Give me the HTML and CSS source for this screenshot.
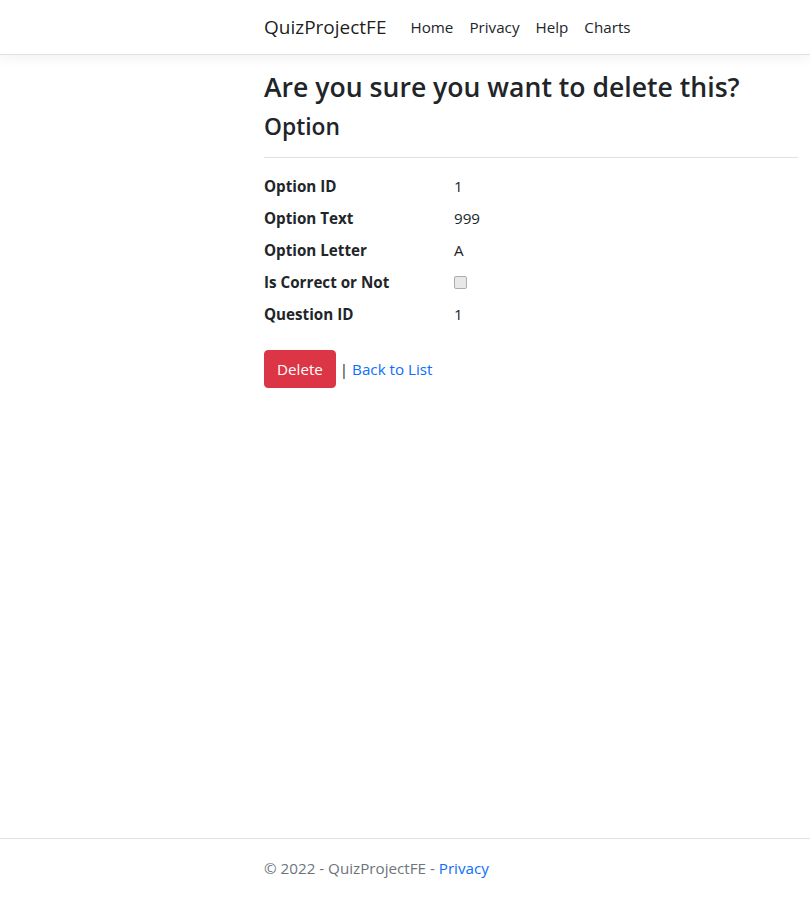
FILE: index.html
```html
<!DOCTYPE html>
<html lang="en">
<head>
<meta charset="utf-8">
<title>Delete - QuizProjectFE</title>
<link rel="stylesheet" href="styles.css">
</head>
<body>
<div class="page">
  <header class="site-header">
    <nav class="navbar">
      <div class="container nav-inner">
        <a class="brand" href="#">QuizProjectFE</a>
        <ul class="nav-list">
          <li><a class="nav-link" href="#">Home</a></li>
          <li><a class="nav-link" href="#">Privacy</a></li>
          <li><a class="nav-link" href="#">Help</a></li>
          <li><a class="nav-link" href="#">Charts</a></li>
        </ul>
      </div>
    </nav>
  </header>

  <main class="container main">
    <h3 class="title">Are you sure you want to delete this?</h3>
    <div>
      <h4 class="subtitle">Option</h4>
      <hr class="rule">
      <dl class="details">
        <dt>Option ID</dt>
        <dd>1</dd>
        <dt>Option Text</dt>
        <dd>999</dd>
        <dt>Option Letter</dt>
        <dd>A</dd>
        <dt>Is Correct or Not</dt>
        <dd><input class="check-box" type="checkbox" disabled></dd>
        <dt>Question ID</dt>
        <dd>1</dd>
      </dl>
      <form class="actions" action="#">
        <button type="button" class="btn-danger">Delete</button> <span class="sep">|</span> <a class="link" href="#">Back to List</a>
      </form>
    </div>
  </main>

  <footer class="footer">
    <div class="container">
      &copy; 2022 - QuizProjectFE - <a class="link" href="#">Privacy</a>
    </div>
  </footer>
</div>
</body>
</html>
```
FILE: styles.css
```css
* { box-sizing: border-box; }

html, body {
  margin: 0;
  padding: 0;
}

body {
  font-family: "Open Sans", "Noto Sans", sans-serif;
  font-size: 15.2px;
  line-height: 24px;
  color: #212529;
  background: #fff;
  overflow-x: hidden;
}

.page {
  min-height: 100vh;
  display: flex;
  flex-direction: column;
}

.container {
  margin-left: 252px;
  padding: 0 12px;
}

.site-header {
  margin-bottom: 16px;
}

.navbar {
  background: #fff;
  border-bottom: 1px solid #dee2e6;
  box-shadow: 0 4px 12px rgba(0, 0, 0, 0.05);
  height: 55px;
  display: flex;
  align-items: center;
}

.nav-inner {
  display: flex;
  align-items: center;
}

.brand {
  font-size: 19px;
  line-height: 30px;
  color: rgba(0, 0, 0, 0.9);
  text-decoration: none;
  margin-right: 16px;
}

.nav-list {
  display: flex;
  list-style: none;
  margin: 0;
  padding: 0;
}

.nav-link {
  display: block;
  padding: 8px;
  color: #212529;
  text-decoration: none;
}

.main {
  flex: 1;
  padding-bottom: 16px;
}

.title {
  font-size: 26.6px;
  font-weight: 600;
  line-height: 33.6px;
  margin: 0 0 8px;
}

.subtitle {
  font-size: 22.8px;
  font-weight: 600;
  line-height: 28.8px;
  margin: 0 0 8px;
}

.rule {
  margin: 16px 0;
  border: 0;
  border-top: 1px solid #dee2e6;
  height: 0;
}

.details {
  display: grid;
  grid-template-columns: 190px 1fr;
  margin: 0 0 16px;
}

.details dt {
  font-weight: 700;
  margin: 0 0 8px;
}

.details dd {
  margin: 0 0 8px;
  display: flex;
  align-items: center;
  height: 24px;
}

.check-box {
  appearance: none;
  -webkit-appearance: none;
  width: 13px;
  height: 13px;
  margin: 0;
  border: 1px solid #adadad;
  border-radius: 2px;
  background: #e8e8e8;
}

.actions {
  margin: 0;
}

.btn-danger {
  font-family: inherit;
  font-size: 15.2px;
  line-height: 24px;
  padding: 6px 12px;
  color: #fff;
  background: #dc3545;
  border: 1px solid #dc3545;
  border-radius: 4px;
  cursor: pointer;
}

.sep {
  color: #212529;
}

.link {
  color: #0d6efd;
  text-decoration: none;
}

.footer {
  border-top: 1px solid #dee2e6;
  line-height: 59px;
  color: #6c757d;
  white-space: nowrap;
}
```
